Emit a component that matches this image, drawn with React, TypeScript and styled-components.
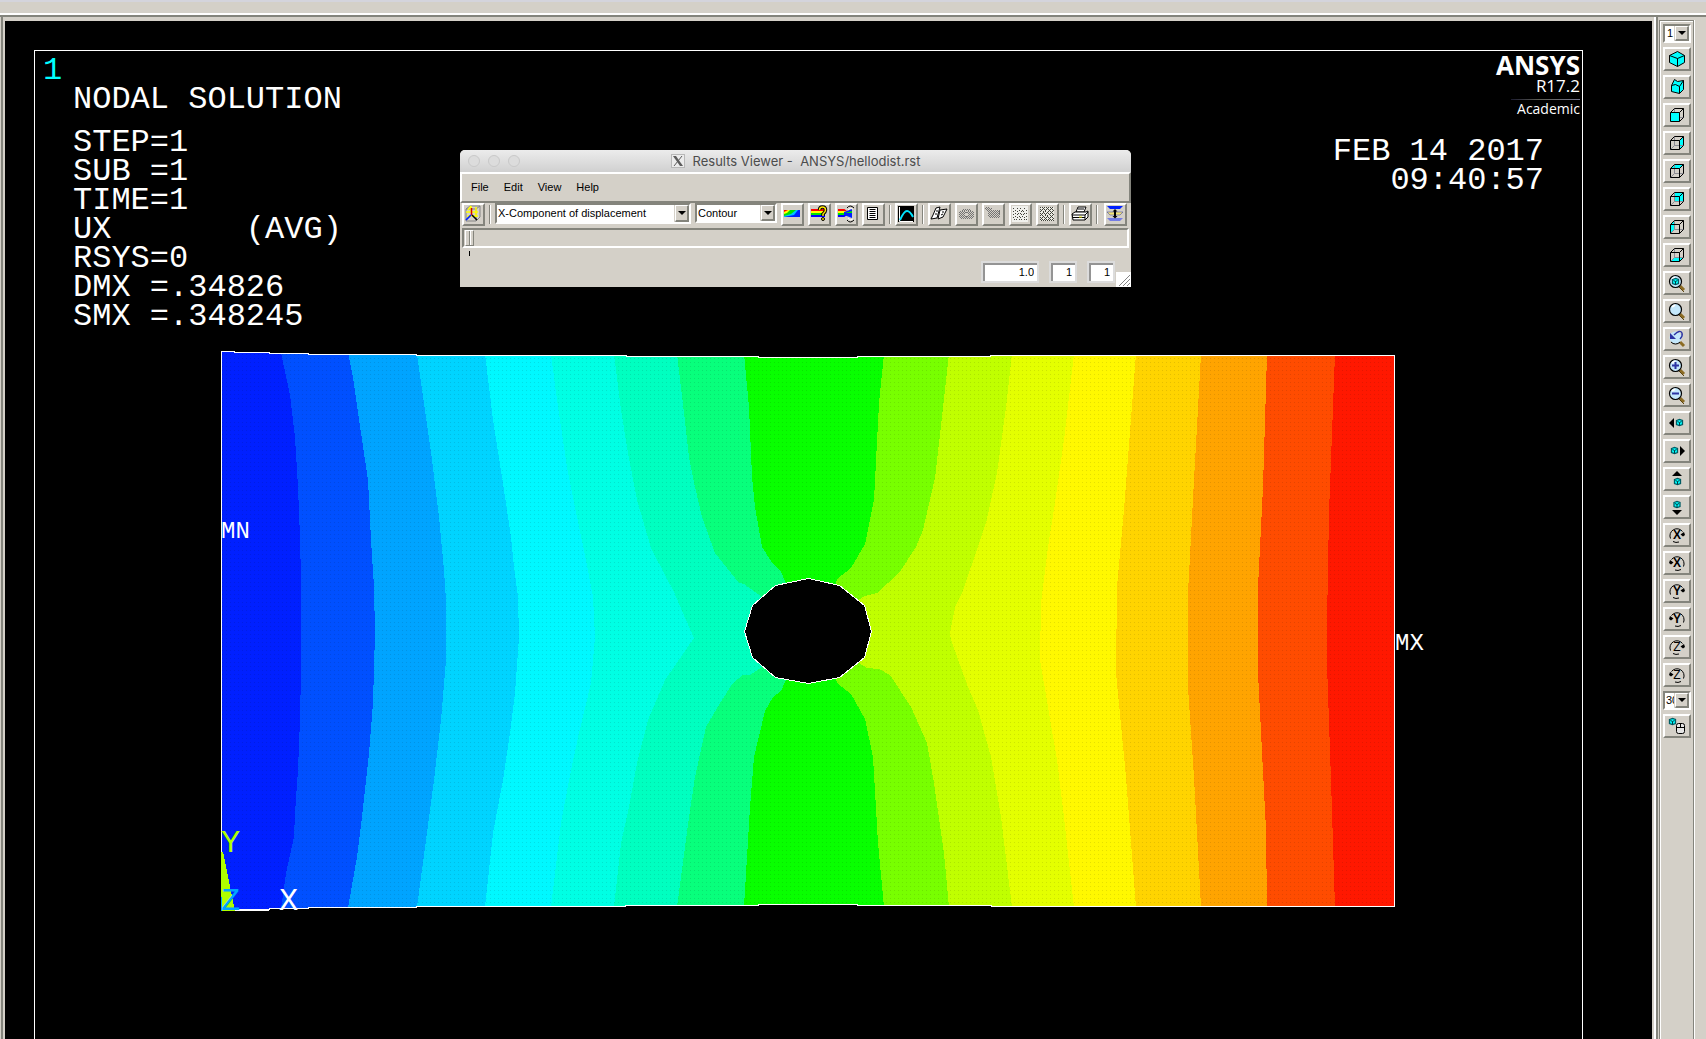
import React from "react";
import styled, { createGlobalStyle } from "styled-components";

const face = "#d4d0c8";
const shade = "#84847c";
const mono = '"Liberation Mono", "Courier New", monospace';
const ui = '"Liberation Sans", Arial, sans-serif';

const GlobalStyle = createGlobalStyle`
  * { box-sizing: border-box; }
  body { margin: 0; background: ${face}; font-family: ${ui}; }
`;

const Screen = styled.div`
  display: flex;
  flex-direction: column;
  height: 100vh;
  overflow: hidden;
  background: ${face};
`;

const TopStrip = styled.header`
  flex: none;
  height: 17px;
  border-top: 2px solid #d4d4dc;
  border-bottom: 2px solid ${shade};
  box-shadow: inset 0 -2px #fff;
`;

const Workspace = styled.div`
  display: flex;
  flex: 1;
  min-height: 0;
`;

const GraphicsPane = styled.main`
  display: flex;
  flex: 1;
  min-width: 0;
  margin-left: 1px;
  padding: 4px 2px 0;
  border-left: 2px solid ${shade};
  border-right: 2px solid #fff;
`;

const Canvas = styled.div`
  position: relative;
  display: flex;
  flex: 1;
  min-width: 0;
  padding: 29px 69px 0 29px;
  overflow: hidden;
  background: #000;
  color: #fff;
`;

const Frame = styled.section`
  flex: 1;
  min-width: 0;
  border: 1px solid #fff;
  border-bottom: 0;
`;

const Annotations = styled.div`
  display: flex;
  justify-content: space-between;
  padding: 5px 2px 0 8px;
  font: 32px/29px ${mono};
  white-space: pre;
`;

const WindowNumber = styled.div`
  color: #00ffff;
`;

const Legend = styled.div`
  padding-left: 30px;
`;

const LegendTitle = styled.div`
  margin-bottom: 14px;
`;

const Brand = styled.div`
  display: flex;
  flex-direction: column;
  align-items: flex-end;
  margin-top: -3px;
  font-family: "Open Sans", "Noto Sans", sans-serif;
`;

const BrandName = styled.div`
  font-size: 26px;
  line-height: 24px;
  font-weight: 700;
`;

const Release = styled.div`
  font-size: 17px;
  line-height: 18px;
`;

const BrandRule = styled.div`
  width: 69px;
  height: 1px;
  margin-top: 4px;
  background: linear-gradient(90deg, #1c1c30, #5c5c54 40%, #74748c);
`;

const Licence = styled.div`
  font-size: 14px;
  line-height: 18px;
`;

const Stamp = styled.time`
  margin: 19px 36px 0 0;
  font: 32px/29px ${mono};
  text-align: right;
`;

const Plot = styled.svg`
  display: block;
  width: 100%;
  height: auto;
  overflow: visible;
  font-family: ${mono};
`;

/* ---------- side palette ---------- */

const SideBar = styled.aside`
  flex: none;
  padding: 3px 12px 0 1px;
  border-left: 2px solid ${shade};
`;

const Palette = styled.div`
  display: flex;
  flex-direction: column;
  gap: 4px;
  width: 35px;
  height: 100%;
  padding: 3px 2px 0 3px;
  border: 1px solid ${shade};
  border-bottom: 0;
  box-shadow: inset 1px 1px #fff, 1px 0 #fff;
`;

const ToolButton = styled.button<{ $w: number; $h: number }>`
  flex: none;
  display: block;
  width: ${(p) => p.$w}px;
  height: ${(p) => p.$h}px;
  padding: 0;
  overflow: hidden;
  background: ${face};
  border: 2px solid;
  border-color: #fff ${shade} ${shade} #fff;
  svg { display: block; }
`;

const SelectBox = styled.div<{ $w: number; $h: number }>`
  position: relative;
  flex: none;
  width: ${(p) => p.$w}px;
  height: ${(p) => p.$h}px;
  border: 2px solid;
  border-color: ${shade} #fff #fff ${shade};
  background: ${face};
`;

const NativeSelect = styled.select<{ $pad: number }>`
  appearance: none;
  display: block;
  width: calc(100% - 15px);
  height: 100%;
  padding: 0 0 0 ${(p) => p.$pad}px;
  border: 0;
  border-radius: 0;
  background: #fff;
  color: #000;
  font: 11px/15px ${ui};
  text-overflow: clip;
`;

const DropArrow = styled.span`
  position: absolute;
  top: 0;
  right: 0;
  bottom: 0;
  display: flex;
  align-items: center;
  justify-content: center;
  width: 14px;
  border: 2px solid;
  border-width: 1px 2px 2px 1px;
  border-color: #fff ${shade} ${shade} #fff;
  background: ${face};
  pointer-events: none;
  &::after {
    content: "";
    border: 4px solid transparent;
    border-top-color: #000;
    border-bottom: 0;
  }
`;

/* ---------- results viewer window ---------- */

const Window = styled.section`
  position: absolute;
  left: 455px;
  top: 129px;
  width: 671px;
  border-radius: 5px 5px 0 0;
  overflow: hidden;
  background: ${face};
  color: #000;
  font: 11px/14px ${ui};
`;

const TitleBar = styled.div`
  display: flex;
  align-items: center;
  height: 22px;
  padding: 0 8px;
  background: linear-gradient(#ececec, #d0d0d0);
`;

const Lights = styled.div`
  display: flex;
  flex: 1;
  gap: 8px;
`;

const Light = styled.span`
  width: 12px;
  height: 12px;
  border: 1px solid #c8c8c8;
  border-radius: 50%;
  background: #dcdcdc;
`;

const Title = styled.h1`
  display: flex;
  align-items: center;
  gap: 8px;
  margin: 0;
  color: #4c4c4c;
  font: 13px/16px Inter, sans-serif;
  white-space: pre;
`;

const TitleSpacer = styled.span`
  flex: 1;
`;

const MenuBar = styled.nav`
  display: flex;
  align-items: flex-start;
  gap: 15px;
  height: 31px;
  padding: 6px 9px 0;
  border: 2px solid;
  border-color: #fff ${shade} ${shade} #fff;
`;

const MenuItem = styled.button`
  padding: 0;
  border: 0;
  background: none;
  color: #000;
  font: 11px/14px ${ui};
`;

const ToolRow = styled.div`
  display: flex;
  gap: 4px;
  height: 25px;
  padding: 0 4px 0 2px;
`;

const Divider = styled.span`
  width: 2px;
  height: 19px;
  margin-top: 2px;
  border-left: 1px solid ${shade};
  border-right: 1px solid #fff;
`;

const LastTool = styled.span`
  margin-left: auto;
`;

const Slider = styled.input`
  appearance: none;
  display: block;
  width: calc(100% - 4px);
  height: 20px;
  margin: 0 2px;
  padding: 0 1px;
  border: 2px solid;
  border-color: ${shade} #fff #fff ${shade};
  background: ${face};
  &::-webkit-slider-thumb {
    appearance: none;
    width: 9px;
    height: 16px;
    border: 1px solid;
    border-color: #fff ${shade} ${shade} #fff;
    background: linear-gradient(90deg, ${face} 3px, ${shade} 3px 4px, #fff 4px 5px, ${face} 5px);
  }
`;

const Tick = styled.div`
  width: 1px;
  height: 5px;
  margin: 3px 0 5px 9px;
  background: #000;
`;

const StatusRow = styled.div`
  display: flex;
  justify-content: flex-end;
  gap: 10px;
  height: 26px;
  padding-right: 16px;
  position: relative;
`;

const NumberField = styled.input<{ $w: number }>`
  width: ${(p) => p.$w}px;
  height: 22px;
  padding: 0 3px;
  border: 2px solid #dcdcdc;
  border-radius: 0;
  background: #fff;
  box-shadow: inset 2px 2px #949494;
  color: #000;
  font: 11px/14px ${ui};
  text-align: right;
`;

const Grip = styled.svg`
  position: absolute;
  right: 0;
  bottom: 0;
  background: #fff;
`;

/* ---------- contour data ---------- */

type Pt = [number, number];

const levels: string[] = [
  "#0020ff", "#0050ff", "#00a4ff", "#00d4ff", "#00f8ff", "#00ffe4", "#00ffc0", "#08ff7c", "#08ff00",
  "#78ff00", "#c0ff00", "#e4ff00", "#fff800", "#ffd400", "#ffa400", "#ff4c00", "#ff1800",
];

const isolines: Pt[][] = [
  [[281, 353], [290, 395], [295, 437], [298, 487], [300, 537], [301, 580], [301, 670], [300, 720], [298, 770], [295, 813], [294, 837], [286, 873], [281, 909]],
  [[348, 353], [353, 377], [361, 433], [368, 480], [371, 540], [374, 587], [375, 633], [373, 703], [369, 753], [362, 817], [357, 857], [348, 908]],
  [[417, 354], [425, 410], [432, 460], [439, 517], [444, 570], [446, 600], [446, 660], [441, 720], [434, 780], [426, 840], [417, 907]],
  [[485, 354], [493, 420], [502, 477], [511, 537], [514, 567], [518, 597], [519, 637], [515, 693], [510, 733], [503, 780], [493, 833], [485, 907]],
  [[551, 354], [557, 400], [567, 467], [577, 517], [586, 560], [593, 597], [595, 637], [591, 683], [579, 733], [571, 770], [561, 823], [551, 907]],
  [[614, 354], [621, 410], [628, 453], [637, 500], [651, 548], [666, 577], [673, 590], [686, 620], [694, 638], [665, 680], [648, 720], [637, 763], [629, 807], [621, 843], [614, 907]],
  [[677, 354], [684, 413], [689, 457], [695, 487], [702, 517], [715, 553], [739, 583], [744, 584], [762, 597], [780, 631], [762, 667], [750, 675], [743, 675], [733, 683], [720, 703], [706, 727], [695, 777], [689, 817], [677, 907]],
  [[744, 354], [749, 407], [752, 477], [755, 507], [762, 547], [773, 564], [781, 572], [786, 583], [800, 631], [786, 680], [781, 691], [773, 697], [765, 711], [754, 757], [750, 807], [744, 907]],
  [[884, 354], [879, 403], [874, 500], [865, 544], [851, 568], [837, 579], [836, 584], [816, 631], [835, 678], [838, 684], [851, 694], [865, 719], [873, 757], [878, 843], [884, 907]],
  [[949, 354], [942, 417], [935, 478], [923, 530], [916, 547], [899, 573], [877, 593], [865, 596], [858, 600], [836, 631], [859, 663], [867, 668], [879, 669], [890, 675], [911, 707], [927, 743], [934, 783], [944, 853], [949, 907]],
  [[1012, 354], [1006, 407], [997, 473], [986, 523], [971, 567], [962, 593], [955, 607], [950, 633], [951, 640], [968, 687], [978, 710], [991, 757], [1001, 817], [1012, 907]],
  [[1074, 354], [1064, 440], [1055, 503], [1048, 547], [1041, 603], [1040, 660], [1048, 707], [1057, 760], [1064, 817], [1074, 907]],
  [[1136, 354], [1124, 510], [1117, 587], [1116, 673], [1126, 777], [1136, 907]],
  [[1201, 354], [1194, 480], [1188, 593], [1188, 687], [1194, 777], [1201, 907]],
  [[1267, 354], [1263, 487], [1258, 587], [1258, 673], [1266, 830], [1267, 907]],
  [[1335, 354], [1329, 513], [1327, 623], [1327, 665], [1331, 780], [1335, 907]],
];

const outline: Pt[] = [
  [221, 351], [234, 351], [234, 352], [269, 352], [269, 353], [308, 353], [308, 354], [416, 354], [416, 355],
  [626, 355], [626, 356], [758, 356], [758, 357], [857, 357], [857, 356], [990, 356], [990, 355], [1394, 355],
  [1394, 906], [991, 906], [991, 905], [857, 905], [857, 904], [758, 904], [758, 905], [625, 905], [625, 906],
  [416, 906], [416, 907], [308, 907], [308, 908], [269, 908], [269, 909], [221, 909],
];

const hole: Pt[] = [
  [808, 578], [839, 585], [864, 605], [871, 631], [864, 657], [839, 677],
  [808, 683], [775, 677], [752, 657], [744, 631], [752, 605], [775, 585],
];

const points = (list: Pt[]) => list.map((p) => p.join(",")).join(" ");

const rightEdge: Pt[] = [[1396, 350], [1396, 912]];

function ContourPlot() {
  return (
    <Plot viewBox="35 331 1547 640" role="img" aria-label="Nodal solution contour plot">
      <defs>
        <pattern id="stipple" x="0" y="0" width="4" height="4" patternUnits="userSpaceOnUse">
          <rect x="2" y="2" width="1" height="1" fill="#000" fillOpacity="0.1" />
        </pattern>
        <clipPath id="plate">
          <polygon points={points(outline)} />
        </clipPath>
      </defs>
      <g shapeRendering="crispEdges">
        <g clipPath="url(#plate)">
          <rect x="221" y="350" width="1175" height="562" fill={levels[0]} />
          {isolines.map((line, i) => (
            <polygon key={i} points={points([...line, rightEdge[1], rightEdge[0]])} fill={levels[i + 1]} />
          ))}
          <rect x="221" y="350" width="1175" height="562" fill="url(#stipple)" />
        </g>
        <polygon points={points(outline)} fill="none" stroke="#fff" transform="translate(0.5 0.5)" />
        <polygon points={points(hole)} fill="#000" stroke="#fff" transform="translate(0.5 0.5)" />
        <rect x="221" y="909" width="48" height="2" fill="#fff" />
        <polygon points="221,852 223,852 235,911 221,911" fill="#b0ff00" />
        <rect x="221" y="897" width="1" height="14" fill="#00a4ff" />
      </g>
      <g fill="#fff" fontSize="24">
        <text x="221" y="538">MN</text>
        <text x="1395" y="650">MX</text>
      </g>
      <g fontSize="32">
        <text x="221" y="852" fill="#b0ff00">Y</text>
        <text x="221" y="910" fill="#00a4ff">Z</text>
        <text x="279" y="910" fill="#fff">X</text>
      </g>
    </Plot>
  );
}

/* ---------- palette icons, 28x24 button space ---------- */

const cyan = "#00ffff";

const faces: Record<string, string> = {
  Front: "7,9 16,9 16,18 7,18",
  Right: "16,9 20,5 20,14 16,18",
  Top: "7,9 11,5 20,5 16,9",
  Back: "11,5 20,5 20,14 11,14",
  Left: "7,9 11,5 11,14 7,18",
  Bottom: "7,18 11,14 20,14 16,18",
};

const CubeFace = ({ side }: { side: string }) => (
  <g transform="translate(0.5 0.5)" fill="none">
    <polygon points={faces[side]} fill={cyan} />
    {side !== "Front" && <path d="M11 5V14H20M7 18L11 14" stroke="#8c8c94" />}
    {side === "Front" && <path d="M11 5V9M16 14H20" stroke="#8c8c94" />}
    <path d="M7 9H16V18H7ZM7 9L11 5H20L16 9M20 5V14L16 18" stroke="#000" />
  </g>
);

const MiniCube = ({ x, y }: { x: number; y: number }) => (
  <g transform={`translate(${x} ${y})`}>
    <path d="M-3 -2L0 -3L3 -2V2L0 3L-3 2Z" fill={cyan} stroke="#005c64" strokeWidth="1.3" />
    <path d="M-2 -1L0 0L2 -1M0 0V3" fill="none" stroke="#003c44" />
  </g>
);

const Lens = ({ children }: { children?: React.ReactNode }) => (
  <g>
    <path d="M17 15L21 19" stroke="#8c6c24" strokeWidth="3" />
    <path d="M16 16L21 21" stroke="#5c4410" strokeWidth="1" />
    <circle cx="12.5" cy="10.5" r="6" fill="#c4e8fc" stroke="#000" strokeWidth="1.2" />
    <path d="M9 8L12 6" stroke="#fff" strokeWidth="2" />
    {children}
  </g>
);

const Turn = ({ axis, back }: { axis: string; back?: boolean }) => (
  <g>
    <g transform={back ? "translate(28 0) scale(-1 1)" : undefined}>
      <path d="M19.500 8.500A7 7 0 0 0 7.500 15.500M10 18.500A7 7 0 0 0 16 19" fill="none" stroke="#000" />
      <path d="M21 9L22 12L20 13.500L17.500 11.500Z" fill="#000" />
    </g>
    <text
      x="14"
      y="16"
      textAnchor="middle"
      fontFamily="Liberation Sans, sans-serif"
      fontSize="12"
      fontWeight={axis === "Z" ? 400 : 700}
    >
      {axis}
    </text>
  </g>
);

const sideTools: { name: string; art: React.ReactNode }[] = [
  {
    name: "Isometric view",
    art: (
      <g transform="translate(0.5 0.5)" fill={cyan} stroke="#000">
        <path d="M14 4L21 8V15L14 19L6 15V8Z" />
        <path d="M6 8L14 11L21 8M14 11V19" fill="none" />
      </g>
    ),
  },
  {
    name: "Oblique view",
    art: (
      <g transform="translate(0.5 0.5)" fill={cyan} stroke="#000">
        <path d="M11 4L14 6L20 5V14L16 18L8 16V10Z" />
        <path d="M8 10L12 9L16 11L20 5M16 11V18" fill="none" />
      </g>
    ),
  },
  ...["Front", "Right", "Top", "Back", "Left", "Bottom"].map((side) => ({
    name: `${side} view`,
    art: <CubeFace side={side} />,
  })),
  { name: "Fit view", art: <Lens><MiniCube x={12.5} y={10.5} /></Lens> },
  { name: "Zoom model", art: <Lens /> },
  {
    name: "Back up zoom",
    art: (
      <g>
        <path d="M17 15L21 19" stroke="#8c6c24" strokeWidth="3" />
        <circle cx="12.5" cy="10.5" r="6" fill="#c4e8fc" />
        <path d="M8 15A6 6 0 0 0 17 15" fill="none" stroke="#000" />
        <path d="M11 8Q17 2 19 6Q20 9 17 12" fill="none" stroke="#2c34a4" strokeWidth="1.4" />
        <path d="M7 6V12H13Z" fill="#2c34a4" />
      </g>
    ),
  },
  { name: "Zoom in", art: <Lens><path d="M9 10.5H16M12.5 7V14" stroke="#2c34a4" strokeWidth="2" /></Lens> },
  { name: "Zoom out", art: <Lens><path d="M9 10.5H16" stroke="#2c34a4" strokeWidth="2" /></Lens> },
  { name: "Pan left", art: <g><path d="M6 12L11 7V17Z" /><MiniCube x={16.5} y={11.5} /></g> },
  { name: "Pan right", art: <g><path d="M22 12L17 7V17Z" /><MiniCube x={11.5} y={11.5} /></g> },
  { name: "Pan up", art: <g><path d="M14 4L19 9H9Z" /><MiniCube x={14.5} y={14.5} /></g> },
  { name: "Pan down", art: <g><path d="M14 20L19 15H9Z" /><MiniCube x={14} y={9.5} /></g> },
  { name: "Rotate +X", art: <Turn axis="X" /> },
  { name: "Rotate -X", art: <Turn axis="X" back /> },
  { name: "Rotate +Y", art: <Turn axis="Y" /> },
  { name: "Rotate -Y", art: <Turn axis="Y" back /> },
  { name: "Rotate +Z", art: <Turn axis="Z" /> },
  { name: "Rotate -Z", art: <Turn axis="Z" back /> },
];

function SideButton({ name, children }: { name: string; children: React.ReactNode }) {
  return (
    <ToolButton $w={28} $h={24} aria-label={name}>
      <svg width="24" height="20" viewBox="2 2 24 20">{children}</svg>
    </ToolButton>
  );
}

/* ---------- viewer icons, 23x23 button space ---------- */

/* Paints the cells marked "#" in a small bitmap. */
const Bitmap = ({ rows, x, y, color }: { rows: string[]; x: number; y: number; color: string }) => {
  let d = "";
  rows.forEach((row, j) => {
    row.split("").forEach((c, i) => {
      if (c === "#") d += `M${x + i} ${y + j}h1v1h-1z`;
    });
  });
  return <path d={d} fill={color} shapeRendering="crispEdges" />;
};

const stripes = (
  <g>
    <path d="M3 6H17V8H3Z" fill="#ff0000" />
    <path d="M3 8H17V10H3Z" fill="#ffff00" />
    <path d="M3 10H17V12H3Z" fill="#00e400" />
    <path d="M3 12H17V14H3Z" fill="#0000ff" />
  </g>
);

const viewerTools: Record<string, React.ReactNode> = {
  "Element plot": (
    <g fill="none">
      <path d="M4 6H14V18H4ZM4 6L8 3H18V14L14 18M14 6L18 3" stroke="#848484" />
      <path d="M4 9H16M5 13H16M9 3V8M14 4V14M6 7L9 3" stroke="#ffff00" strokeWidth="1.5" />
      <path d="M9.5 5V12" stroke="#d40000" strokeWidth="1.5" />
      <path d="M9 12L4 17" stroke="#0020ff" strokeWidth="1.7" />
      <path d="M10 12L15 17" stroke="#000" strokeWidth="1.5" />
    </g>
  ),
  "Plot results": (
    <g>
      <path d="M3 7H19V14H3Z" fill="#0020ff" />
      <path d="M3 7H17L13 12L3 14Z" fill="#00c4ff" />
      <path d="M3 7H15L10 11L3 13Z" fill="#00e400" />
      <path d="M3 7H9L6 10L3 11Z" fill="#ffff00" />
      <path d="M3 7H7L3 9Z" fill="#ff0000" />
    </g>
  ),
  "Query results": (
    <g>
      {stripes}
      <path d="M11.500 7Q11.500 4 14.500 4Q17.500 4 17.500 7Q17.500 9 15 11V13" fill="none" stroke="#000" strokeWidth="3.500" />
      <path d="M11.500 7Q11.500 4 14.500 4Q17.500 4 17.500 7Q17.500 9 15 11V13" fill="none" stroke="#ffe400" strokeWidth="1.500" />
      <circle cx="15" cy="16" r="1.5" fill="#ffe400" stroke="#000" />
    </g>
  ),
  "Animate results": (
    <g>
      {stripes}
      <path d="M8 5H18V8L12 8ZM8 15H18V13L12 12Z" fill={face} />
      <path d="M9 9L17 6V15L9 12Z" fill="#0020ff" />
      <path d="M10 10L17 8V10Z" fill="#00e400" />
      <path d="M12 5Q15 1 19 5M12 17Q15 21 19 17" fill="none" stroke="#000" />
      <path d="M13 7Q15 4 18 6M13 15Q15 18 18 16" fill="none" stroke="#fff" />
    </g>
  ),
  "List results": (
    <g transform="translate(0.5 0.5)">
      <path d="M5 4H15V16H5Z" fill="#fff" stroke="#000" />
      <path d="M7 6H13M7 8H13M7 10H13M7 12H13M7 14H13" stroke="#000" />
    </g>
  ),
  "Time history": (
    <g>
      <path d="M3 3H19V19H3Z" fill="#000" />
      <path d="M4.500 4V18.500H18" fill="none" stroke="#fff" />
      <path d="M5 17Q9 8 12 8Q15 8 18 14" fill="none" stroke="#00e4ff" strokeWidth="2" />
    </g>
  ),
  "Capture image": (
    <g fill="#fff" stroke="#000">
      <path d="M8 5L12 4L9 15L3 16L5 12Z" />
      <path d="M12 7L19 6L15 14L10 16Z" />
      <path d="M8 8L10 8M7 11L9 11M14 9L16 9M13 12L15 11" />
    </g>
  ),
  "Save animation": (
    <Bitmap
      x={4}
      y={6}
      color="#747474"
      rows={[
        "....#.#.#.#....",
        "...#.#.#.#.#...",
        ".#.#.#...#.#.#.",
        "#.#.#.###.#.#.#",
        ".#.#.#...#.#.#.",
        "#.#.#.....#.#.#",
        ".#.#.#...#.#.#.",
        "#.#.#.###.#.#.#",
        ".#.#.#.#.#.#.#.",
        "..#.#.#.#.#.#..",
      ]}
    />
  ),
  "Play animation": (
    <Bitmap
      x={3}
      y={4}
      color="#747474"
      rows={[
        ".#.#...........",
        "#.#.#.#........",
        ".#.#.#.........",
        "..#.#.#.#.#.#.#",
        "...#.#.#.#.#.##",
        "....#.#.#.#.#.#",
        "...#.#.#.#.#.##",
        "....#.#.#.#.#.#",
        "...#.#.#.#.#.#.",
        "....#.#.#.#.#.#",
        ".....#.#.#.#.#.",
      ]}
    />
  ),
  "Light stipple": (
    <g>
      <path d="M3 3H19V19H3Z" fill="#f0f0ec" />
      <Bitmap
        x={4}
        y={5}
        color="#44443c"
        rows={[
          "#...#..#...#..", "..............", "..#...#..#...#", "#...#...#.#...", "..............", "..#..#.#...#.#",
          "#...#...#.#...", "..............", "..#...#..#...#", "#...#..#...#..", "..............", ".#.#..#.#..#.#",
        ]}
      />
    </g>
  ),
  "Dense stipple": (
    <g>
      <path d="M4 4H18V18H4Z" fill="#ecece4" />
      <Bitmap
        x={4}
        y={4}
        color="#44443c"
        rows={[
          "#.#.#.#.#.#.#.", "...#...#...#..", "#.#.#.#.#.#.#.", ".#...#...#...#", "#..#.#..#.#.#.", "...#...#...#..",
          "#.#.#.#.#.#.#.", ".#...#...#...#", "#.#..#.#..#.#.", "...#...#...#..", "#.#.#.#.#.#.#.", ".#...#...#...#",
          "#.#.#.#.#.#.#.", ".#.#.#.#.#.#.#",
        ]}
      />
    </g>
  ),
  "Print": (
    <g fill="#fff" stroke="#000">
      <path d="M7 9L9 4H17L15 9Z" />
      <path d="M3 11L6 9H17L19 8V14L16 17H4Z" />
      <path d="M3 12H16L19 9M4 14.500H16M16 12V17M9 6H15" fill="none" />
      <path d="M10 14H13" stroke="#e4e400" />
    </g>
  ),
  "Stack windows": (
    <g>
      <path d="M3 3H19L16 6H6Z" fill="#0020ff" />
      <path d="M3 9H19L16 12H6Z" fill="#f4e474" stroke="#2c34a4" strokeWidth="0.500" />
      <path d="M3 15H19L16 18H6Z" fill="#747ce4" />
      <path d="M11 6L13.500 8.500H12V13H13.500L11 15.500L8.500 13H10V8.500H8.500Z" fill="#000" />
    </g>
  ),
};

function ViewerButton({ name }: { name: string }) {
  return (
    <ToolButton $w={23} $h={23} aria-label={name}>
      <svg width="19" height="19" viewBox="2 2 19 19">{viewerTools[name]}</svg>
    </ToolButton>
  );
}

interface DropProps { label: string; value: string; w: number; h: number; pad: number }

function Drop({ label, value, w, h, pad }: DropProps) {
  return (
    <SelectBox $w={w} $h={h}>
      <NativeSelect $pad={pad} aria-label={label} defaultValue={value}>
        <option>{value}</option>
      </NativeSelect>
      <DropArrow />
    </SelectBox>
  );
}

function ResultsViewer() {
  return (
    <Window>
      <TitleBar>
        <Lights><Light /><Light /><Light /></Lights>
        <Title>
          <svg width="14" height="14" viewBox="0 0 14 14" aria-hidden="true">
            <rect x="0.500" y="0.500" width="13" height="13" fill="#ececec" stroke="#b8b8b8" />
            <path d="M2 2H5L12 12H9Z" fill="#5c5c5c" />
            <path d="M11 2L3 12" stroke="#5c5c5c" />
          </svg>
          {"Results Viewer -  ANSYS/hellodist.rst"}
        </Title>
        <TitleSpacer />
      </TitleBar>
      <MenuBar>
        {["File", "Edit", "View", "Help"].map((m) => <MenuItem key={m}>{m}</MenuItem>)}
      </MenuBar>
      <ToolRow>
        <ViewerButton name="Element plot" />
        <Divider />
        <Drop label="Result item" value="X-Component of displacement" w={196} h={21} pad={1} />
        <Drop label="Plot type" value="Contour" w={82} h={20} pad={1} />
        <ViewerButton name="Plot results" />
        <ViewerButton name="Query results" />
        <ViewerButton name="Animate results" />
        <ViewerButton name="List results" />
        <Divider />
        <ViewerButton name="Time history" />
        <Divider />
        <ViewerButton name="Capture image" />
        <ViewerButton name="Save animation" />
        <ViewerButton name="Play animation" />
        <ViewerButton name="Light stipple" />
        <ViewerButton name="Dense stipple" />
        <Divider />
        <ViewerButton name="Print" />
        <Divider />
        <LastTool><ViewerButton name="Stack windows" /></LastTool>
      </ToolRow>
      <Slider type="range" min="1" max="10" defaultValue="1" aria-label="Result set" />
      <Tick />
      <StatusRow>
        <NumberField $w={58} defaultValue="1.0" aria-label="Time" />
        <NumberField $w={28} defaultValue="1" aria-label="Load step" />
        <NumberField $w={28} defaultValue="1" aria-label="Substep" />
        <Grip width="15" height="15" viewBox="0 0 15 15" aria-hidden="true">
          <path d="M3 14L14 3M7 14L14 7M11 14L14 11" stroke="#848484" />
        </Grip>
      </StatusRow>
    </Window>
  );
}

export default function App() {
  return (
    <Screen>
      <GlobalStyle />
      <TopStrip />
      <Workspace>
        <GraphicsPane>
          <Canvas>
            <Frame>
              <Annotations>
                <div>
                  <WindowNumber>1</WindowNumber>
                  <Legend>
                    <LegendTitle>NODAL SOLUTION</LegendTitle>
                    <div>STEP=1</div>
                    <div>SUB =1</div>
                    <div>TIME=1</div>
                    <div>{"UX       (AVG)"}</div>
                    <div>RSYS=0</div>
                    <div>DMX =.34826</div>
                    <div>SMX =.348245</div>
                  </Legend>
                </div>
                <Brand>
                  <BrandName>ANSYS</BrandName>
                  <Release>R17.2</Release>
                  <BrandRule />
                  <Licence>Academic</Licence>
                  <Stamp dateTime="2017-02-14T09:40:57">{"FEB 14 2017\n09:40:57"}</Stamp>
                </Brand>
              </Annotations>
              <ContourPlot />
            </Frame>
            <ResultsViewer />
          </Canvas>
        </GraphicsPane>
        <SideBar>
          <Palette>
            <Drop label="Active window" value="1" w={28} h={19} pad={2} />
            {sideTools.map((t) => <SideButton key={t.name} name={t.name}>{t.art}</SideButton>)}
            <Drop label="Rotation rate" value="30" w={28} h={19} pad={1} />
            <SideButton name="Dynamic model mode">
              <MiniCube x={9.5} y={7.5} />
              <rect x="13.500" y="9.500" width="8" height="10" rx="2" fill="#e4e4e4" stroke="#000" />
              <path d="M13.500 13.500H21.500M17.500 9.500V13.500" stroke="#000" />
            </SideButton>
          </Palette>
        </SideBar>
      </Workspace>
    </Screen>
  );
}
